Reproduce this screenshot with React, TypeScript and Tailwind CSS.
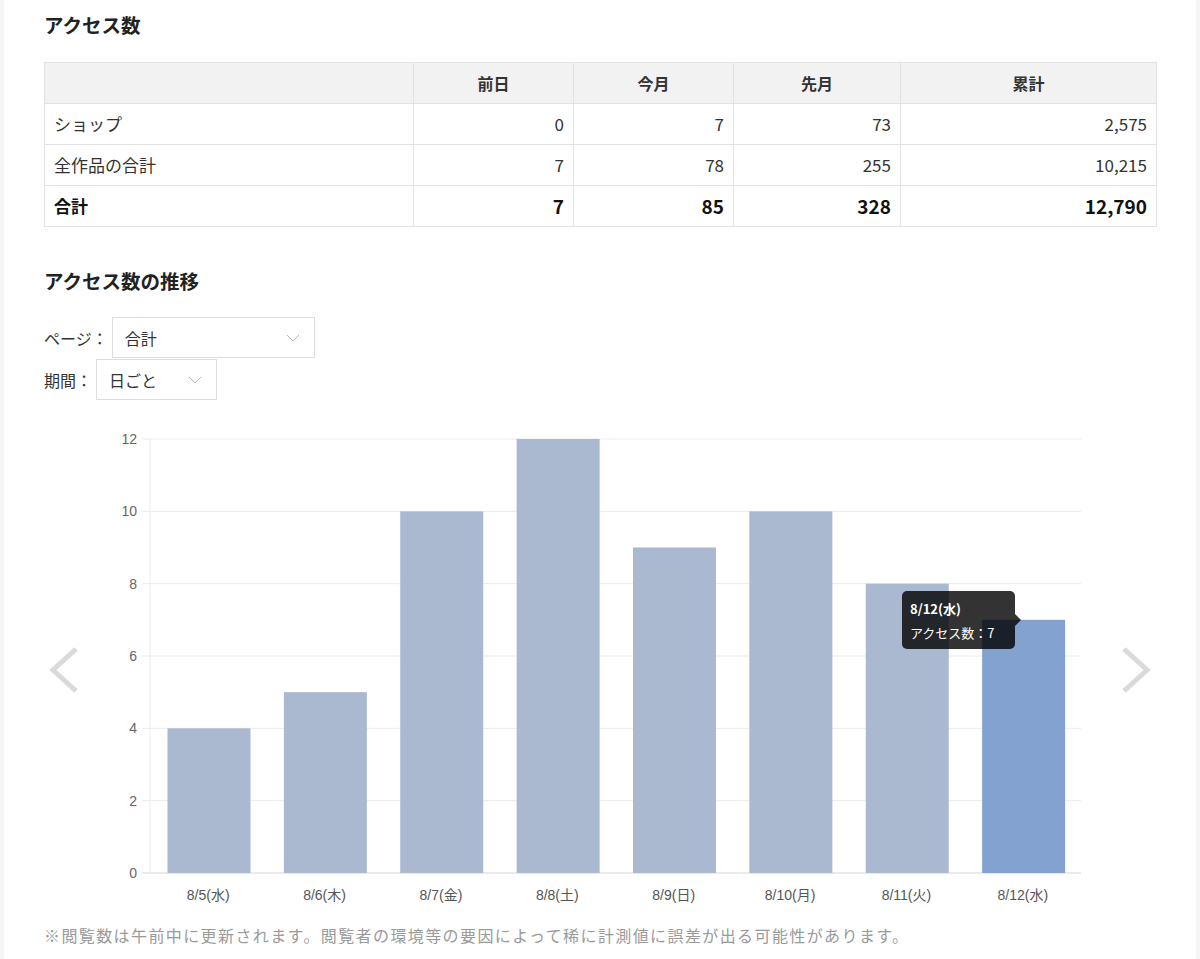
import { FC } from "react";

const font = { fontFamily: '"Noto Sans CJK JP", "Noto Sans", sans-serif' };
const chartFont = '"Liberation Sans", "Noto Sans CJK JP", sans-serif';

interface Row {
  label: string;
  values: string[];
  bold?: boolean;
}

const rows: Row[] = [
  { label: "ショップ", values: ["0", "7", "73", "2,575"] },
  { label: "全作品の合計", values: ["7", "78", "255", "10,215"] },
  { label: "合計", values: ["7", "85", "328", "12,790"], bold: true },
];

const bars = [
  { label: "8/5(水)", value: 4 },
  { label: "8/6(木)", value: 5 },
  { label: "8/7(金)", value: 10 },
  { label: "8/8(土)", value: 12 },
  { label: "8/9(日)", value: 9 },
  { label: "8/10(月)", value: 10 },
  { label: "8/11(火)", value: 8 },
  { label: "8/12(水)", value: 7 },
];

const Select: FC<{ value: string; width: string }> = ({ value, width }) => (
  <div
    className={`flex items-center justify-between h-[41px] border border-[#dddddd] bg-white pl-[12px] pr-[14px] text-[16px] text-[#333] ${width}`}
  >
    <span>{value}</span>
    <svg width="14" height="8" viewBox="0 0 14 8" fill="none">
      <path d="M1 1l6 6 6-6" stroke="#b5b5b5" strokeWidth="1" />
    </svg>
  </div>
);

// chart geometry (svg coords, origin = page x 44 / y 420)
const plotLeft = 106;
const plotRight = 1037;
const plotTop = 19;
const plotBottom = 453;
const unit = (plotBottom - plotTop) / 12;
const cat = (plotRight - plotLeft) / bars.length;

const Chart: FC = () => (
  <div className="relative w-[1112px] h-[500px]">
    <svg width="1112" height="500" viewBox="0 0 1112 500">
      {[0, 2, 4, 6, 8, 10, 12].map((v) => {
        const y = plotBottom - v * unit;
        return (
          <g key={v}>
            <line
              x1={plotLeft - 8}
              x2={plotRight}
              y1={y}
              y2={y}
              stroke={v === 0 ? "#d5d5d5" : "#ebebeb"}
              strokeWidth="1"
            />
            <text
              x={plotLeft - 13}
              y={y + 5}
              textAnchor="end"
              fontSize="14"
              fill="#666"
              fontFamily={chartFont}
            >
              {v}
            </text>
          </g>
        );
      })}
      <line
        x1={plotLeft}
        x2={plotLeft}
        y1={plotTop}
        y2={plotBottom}
        stroke="#ebebeb"
        strokeWidth="1"
      />
      {bars.map((b, i) => {
        const x = plotLeft + cat * i + 17.5;
        const h = b.value * unit;
        return (
          <g key={b.label}>
            <rect
              x={x}
              y={plotBottom - h}
              width={83}
              height={h}
              fill={i === bars.length - 1 ? "#84a2cf" : "#aab8d0"}
            />
            <text
              x={plotLeft + cat * i + cat / 2}
              y={480}
              textAnchor="middle"
              fontSize="14"
              fill="#555"
              fontFamily={chartFont}
            >
              {b.label}
            </text>
          </g>
        );
      })}
      <path
        d="M32 229L9 250L32 271"
        stroke="#dadada"
        strokeWidth="5"
        fill="none"
      />
      <path
        d="M1080 229L1103 250L1080 271"
        stroke="#dadada"
        strokeWidth="5"
        fill="none"
      />
    </svg>
    <div className="absolute left-[858px] top-[171px] w-[113px] h-[58px] rounded-[5px] bg-[rgba(0,0,0,0.8)] px-[8px] pt-[6px] text-white text-[13px] leading-[24px]">
      <div className="font-bold">8/12(水)</div>
      <div>アクセス数：7</div>
      <div className="absolute right-[-6px] top-[23px] w-0 h-0 border-y-[6px] border-y-transparent border-l-[6px] border-l-[rgba(0,0,0,0.8)]" />
    </div>
  </div>
);

export default function App() {
  return (
    <div className="bg-[#f5f5f5] px-[4px] min-h-[959px]" style={font}>
      <div className="bg-white min-h-[959px] px-[40px] pt-[12px] text-[#333]">
        <h2 className="text-[19.5px] font-bold leading-[26px] text-[#222]">
          アクセス数
        </h2>
        <table className="mt-[24px] w-[1112px] border-collapse text-[17px] table-fixed">
          <colgroup>
            <col className="w-[369px]" />
            <col className="w-[160px]" />
            <col className="w-[160px]" />
            <col className="w-[167px]" />
            <col className="w-[256px]" />
          </colgroup>
          <thead>
            <tr className="bg-[#f2f2f2]">
              <th className="h-[41px] border border-[#e2e2e2]" />
              {["前日", "今月", "先月", "累計"].map((h) => (
                <th
                  key={h}
                  className="h-[41px] border border-[#e2e2e2] font-bold text-center text-[16px]"
                >
                  {h}
                </th>
              ))}
            </tr>
          </thead>
          <tbody>
            {rows.map((r) => (
              <tr key={r.label} className={r.bold ? "font-bold text-[#111]" : ""}>
                <td className="h-[41px] border border-[#e2e2e2] px-[9px]">
                  {r.label}
                </td>
                {r.values.map((v, i) => (
                  <td
                    key={i}
                    className={`h-[41px] border border-[#e2e2e2] px-[9px] text-right ${r.bold ? "text-[19px]" : ""}`}
                  >
                    {v}
                  </td>
                ))}
              </tr>
            ))}
          </tbody>
        </table>

        <h2 className="mt-[41px] text-[19.5px] font-bold leading-[26px] text-[#222]">
          アクセス数の推移
        </h2>
        <div className="mt-[23px] flex flex-col">
          <div className="flex items-center gap-[4px]">
            <span className="text-[16px]">ページ：</span>
            <Select value="合計" width="w-[203px]" />
          </div>
          <div className="flex items-center gap-[4px] mt-[1px]">
            <span className="text-[16px]">期間：</span>
            <Select value="日ごと" width="w-[121px]" />
          </div>
        </div>
        <div className="mt-[20px]">
          <Chart />
        </div>
        <p className="mt-[3px] text-[16px] tracking-[1.4px] text-[#9a9a9a]">
          ※閲覧数は午前中に更新されます。閲覧者の環境等の要因によって稀に計測値に誤差が出る可能性があります。
        </p>
      </div>
    </div>
  );
}
